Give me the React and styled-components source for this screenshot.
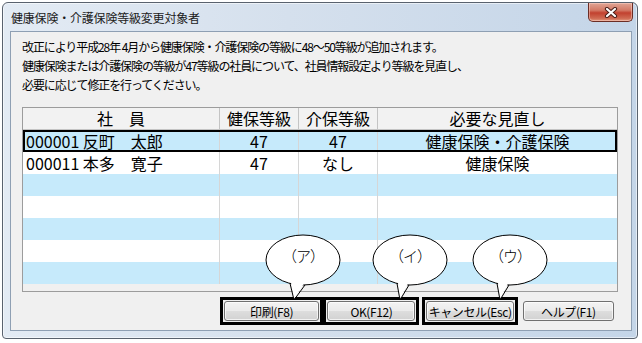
import React from 'react';
import styled, { createGlobalStyle } from 'styled-components';

const GlobalStyle = createGlobalStyle`
  html, body { margin: 0; padding: 0; background: #ffffff; }
  body { font-family: "Noto Sans CJK JP", "Noto Sans", sans-serif; color: #000; }
  * { box-sizing: border-box; }
`;

const Stage = styled.div`
  position: relative;
  width: 642px;
  height: 343px;
  padding: 2px;
`;

const Window = styled.div`
  width: 636px;
  height: 337px;
  border: 1px solid #59626e;
  border-radius: 6px 6px 4px 4px;
  background: linear-gradient(to right, #e3ebf4 0%, #d5e0ed 45%, #c4d5e8 100%);
  box-shadow: inset 0 0 0 1px rgba(255, 255, 255, 0.55);
  display: flex;
  flex-direction: column;
`;

const TitleBar = styled.div`
  height: 28px;
  display: flex;
  justify-content: space-between;
  align-items: flex-start;
  padding: 0 4px 0 8px;
`;

const Title = styled.div`
  height: 28px;
  display: flex;
  align-items: center;
  font-size: 12px;
  color: #1c1c1c;
  letter-spacing: -0.2px;
`;

const CloseButton = styled.div`
  width: 45px;
  height: 19px;
  border: 1px solid #6b2d25;
  border-top: none;
  border-radius: 0 0 5px 5px;
  background: linear-gradient(#e0a595 0%, #d37a66 40%, #c2412f 55%, #cf6a52 85%, #e29a80 100%);
  box-shadow: inset 0 0 0 1px rgba(255, 220, 210, 0.45);
  display: flex;
  align-items: center;
  justify-content: center;
`;

const Client = styled.div`
  height: 300px;
  margin: 0 5px 0 7px;
  border: 1px solid #8e9fb3;
  background: #f0f0f0;
  padding: 5px 13px 5px 11px;
  display: flex;
  flex-direction: column;
`;

const Intro = styled.div`
  font-size: 12px;
  line-height: 19px;
  letter-spacing: -1.1px;
  white-space: nowrap;
`;

const TableBox = styled.div`
  margin-top: 13px;
  height: 185px;
  border: 1px solid #9c9c9c;
  background: #f0f0f0;
  display: flex;
  flex-direction: column;
`;

const cols = '197px 79px 79px 1fr';

const HeaderRow = styled.div`
  display: grid;
  grid-template-columns: ${cols};
  height: 22px;
  border-bottom: 1px solid #c4c4c4;
  background: #f2f2f2;
`;

const HeadCell = styled.div`
  font-size: 16px;
  line-height: 21px;
  text-align: center;
  border-right: 1px solid #c4c4c4;
  white-space: nowrap;
  &:last-child { border-right: none; }
`;

const Row = styled.div`
  display: grid;
  grid-template-columns: ${cols};
  height: 22px;
  background: ${p => (p.$alt ? '#ffffff' : '#c6eafb')};
  outline: ${p => (p.$selected ? '2px solid #000' : 'none')};
  outline-offset: -2px;
`;

const Cell = styled.div`
  font-size: 16px;
  line-height: 22px;
  text-align: ${p => (p.$left ? 'left' : 'center')};
  padding-left: ${p => (p.$left ? '3px' : '0')};
  border-right: 1px solid #d6d6d6;
  white-space: nowrap;
  overflow: hidden;
  &:last-child { border-right: none; }
`;

const ButtonRow = styled.div`
  margin-top: 5px;
  height: 28px;
  display: flex;
  padding-left: 198px;
`;

const Slot = styled.div`
  width: ${p => p.$w}px;
  margin-left: ${p => p.$gap || 0}px;
  border: 3px solid ${p => (p.$mark ? '#000' : 'transparent')};
  padding: 1px;
`;

const Button = styled.div`
  width: 100%;
  height: 100%;
  border: 1px solid #707070;
  border-radius: 3px;
  background: linear-gradient(#f3f3f3 0%, #ebebeb 48%, #dddddd 52%, #d2d2d2 100%);
  box-shadow: inset 0 0 0 1px rgba(255, 255, 255, 0.7);
  font-size: 12px;
  letter-spacing: -0.4px;
  display: flex;
  align-items: center;
  justify-content: center;
`;

const BubbleWrap = styled.div`
  position: absolute;
  pointer-events: none;
`;

const BubbleSvg = styled.svg`
  position: absolute;
  left: 0;
  top: 0;
  overflow: visible;
`;

const BubbleLabel = styled.div`
  position: absolute;
  left: 0;
  right: 0;
  display: flex;
  align-items: center;
  justify-content: center;
  font-size: 15px;
  font-weight: 300;
  letter-spacing: -1px;
  color: #000;
`;

const RX = 37;
const RY = 25;

const bubbles = [
  { label: '（ア）', cx: 303, cy: 260, tail: [290, 305, 294, 300] },
  { label: '（イ）', cx: 410, cy: 260, tail: [397, 409, 400, 300] },
  { label: '（ウ）', cx: 510, cy: 260, tail: [497, 509, 500, 300] },
];

function Bubble({ label, cx, cy, tail }) {
  const [x1, x2, ax, ay] = tail;
  const ey = x => cy + RY * Math.sqrt(Math.max(0, 1 - ((x - cx) / RX) ** 2));
  const y1 = ey(x1);
  const y2 = ey(x2);
  const left = cx - RX - 2;
  const top = cy - RY - 2;
  const w = RX * 2 + 4;
  const h = ay - top + 2;
  return (
    <BubbleWrap style={{ left, top, width: w, height: h }}>
      <BubbleSvg width={w} height={h} viewBox={`${left} ${top} ${w} ${h}`}>
        <ellipse cx={cx} cy={cy} rx={RX} ry={RY} fill="#fff" stroke="#000" strokeWidth="1" />
        <polygon points={`${x1 + 0.8},${y1 - 2} ${x2 - 0.8},${y2 - 2} ${ax},${ay - 1}`} fill="#fff" />
        <polyline points={`${x1},${y1} ${ax},${ay} ${x2},${y2}`} fill="none" stroke="#000" strokeWidth="1" />
      </BubbleSvg>
      <BubbleLabel style={{ top: cy - top - 16, height: 22 }}>{label}</BubbleLabel>
    </BubbleWrap>
  );
}

const rows = [
  { name: '000001 反町　太郎', ken: '47', kai: '47', need: '健康保険・介護保険', selected: true },
  { name: '000011 本多　寛子', ken: '47', kai: 'なし', need: '健康保険' },
  {}, {}, {}, {}, {},
];

const buttons = [
  { label: '印刷(F8)', w: 104, gap: 0, mark: true },
  { label: 'OK(F12)', w: 97, gap: 0, mark: true },
  { label: 'キャンセル(Esc)', w: 96, gap: 3, mark: true },
  { label: 'ヘルプ(F1)', w: 100, gap: 1, mark: false },
];

export default function App() {
  return (
    <Stage>
      <GlobalStyle />
      <Window>
        <TitleBar>
          <Title>健康保険・介護保険等級変更対象者</Title>
          <CloseButton>
            <svg width="14" height="11" viewBox="0 0 14 11">
              <path d="M3 2 L11 9 M11 2 L3 9" stroke="#4a1e17" strokeWidth="4.2" strokeLinecap="round" />
              <path d="M3 2 L11 9 M11 2 L3 9" stroke="#ffffff" strokeWidth="2.2" strokeLinecap="round" />
            </svg>
          </CloseButton>
        </TitleBar>
        <Client>
          <Intro>
            <div>改正により平成28年 4月から健康保険・介護保険の等級に48～50等級が追加されます。</div>
            <div>健康保険または介護保険の等級が47等級の社員について、社員情報設定より等級を見直し、</div>
            <div>必要に応じて修正を行ってください。</div>
          </Intro>
          <TableBox>
            <HeaderRow>
              <HeadCell>社　員</HeadCell>
              <HeadCell>健保等級</HeadCell>
              <HeadCell>介保等級</HeadCell>
              <HeadCell>必要な見直し</HeadCell>
            </HeaderRow>
            {rows.map((r, i) => (
              <Row key={i} $alt={i % 2 === 1} $selected={r.selected}>
                <Cell $left>{r.name || ''}</Cell>
                <Cell>{r.ken || ''}</Cell>
                <Cell>{r.kai || ''}</Cell>
                <Cell>{r.need || ''}</Cell>
              </Row>
            ))}
          </TableBox>
          <ButtonRow>
            {buttons.map(b => (
              <Slot key={b.label} $w={b.w} $gap={b.gap} $mark={b.mark}>
                <Button>{b.label}</Button>
              </Slot>
            ))}
          </ButtonRow>
        </Client>
      </Window>
      {bubbles.map(b => (
        <Bubble key={b.label} {...b} />
      ))}
    </Stage>
  );
}
